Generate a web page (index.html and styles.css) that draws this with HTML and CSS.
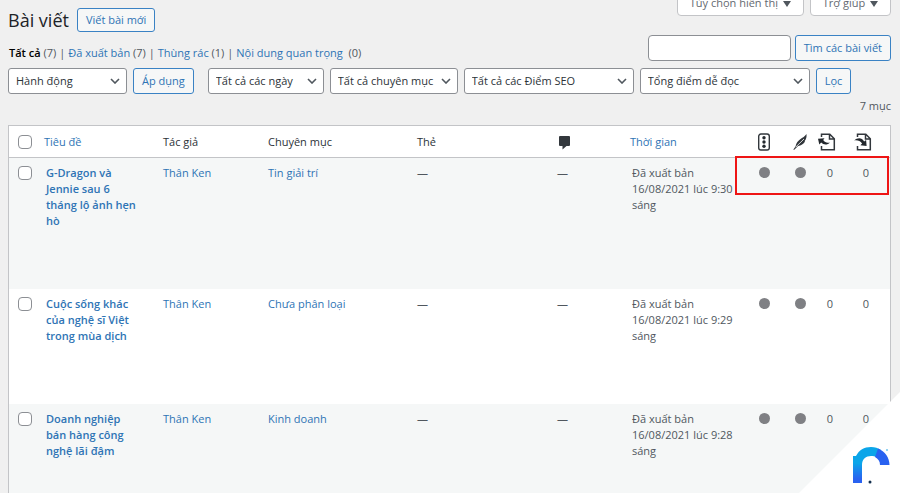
FILE: index.html
```
<!DOCTYPE html>
<html lang="vi">
<head>
    <meta charset="UTF-8">
    <meta name="viewport" content="width=device-width, initial-scale=1.0">
    <title>Bài viết</title>
    <link rel="stylesheet" href="styles.css">
</head>
<body>
    <main class="wrap">
        <header class="page-head">
            <div class="heading">
                <h1>Bài viết</h1>
                <a href="#" class="button">Viết bài mới</a>
            </div>
            <div class="screen-tabs">
                <button type="button" class="tab">Tùy chọn hiển thị <span class="arrow"></span></button>
                <button type="button" class="tab">Trợ giúp <span class="arrow"></span></button>
            </div>
        </header>

        <div class="views-row">
            <ul class="views">
                <li><a href="#" class="current">Tất cả</a> (7) |</li>
                <li><a href="#">Đã xuất bản</a> (7) |</li>
                <li><a href="#">Thùng rác</a> (1) |</li>
                <li><a href="#">Nội dung quan trọng</a>&nbsp; (0)</li>
            </ul>
            <form class="search">
                <input type="search" aria-label="Tìm các bài viết">
                <button type="button" class="button">Tìm các bài viết</button>
            </form>
        </div>

        <div class="filters">
            <div class="group">
                <select class="w-action" aria-label="Hành động"><option>Hành động</option></select>
                <button type="button" class="button">Áp dụng</button>
            </div>
            <div class="group">
                <select class="w-date" aria-label="Ngày"><option>Tất cả các ngày</option></select>
                <select class="w-cat" aria-label="Chuyên mục"><option>Tất cả chuyên mục</option></select>
                <select class="w-score" aria-label="Điểm SEO"><option>Tất cả các Điểm SEO</option></select>
                <select class="w-score" aria-label="Điểm dễ đọc"><option>Tổng điểm dễ đọc</option></select>
                <button type="button" class="button">Lọc</button>
            </div>
        </div>
        <p class="count">7 mục</p>

        <div class="table-box">
            <table class="posts">
                <colgroup>
                    <col class="c-check">
                    <col class="c-title">
                    <col class="c-author">
                    <col class="c-category">
                    <col>
                    <col class="c-comments">
                    <col class="c-date">
                    <col class="c-icon">
                    <col class="c-icon">
                    <col class="c-icon">
                    <col class="c-icon">
                </colgroup>
                <thead>
                    <tr>
                        <th class="check"><input type="checkbox" aria-label="Chọn toàn bộ"></th>
                        <th><a href="#">Tiêu đề</a></th>
                        <th>Tác giả</th>
                        <th>Chuyên mục</th>
                        <th>Thẻ</th>
                        <th>
                            <svg width="14" height="14" viewBox="0 0 14 14"><path d="M3 0h9a1 1 0 0 1 1 1v8a1 1 0 0 1-1 1H9.500L5.500 13.500V10H3a1 1 0 0 1-1-1V1a1 1 0 0 1 1-1z" fill="#32373c"/></svg>
                        </th>
                        <th><a href="#">Thời gian</a></th>
                        <th class="icon">
                            <svg width="18" height="18" viewBox="0 0 18 18" fill="#23282d"><rect x="3.700" y="1" width="10.600" height="16" rx="2.200" fill="none" stroke="#32373c" stroke-width="1.400"/><circle cx="9" cy="4.800" r="1.700"/><circle cx="9" cy="9" r="1.700"/><circle cx="9" cy="13.200" r="1.700"/></svg>
                        </th>
                        <th class="icon">
                            <svg width="18" height="18" viewBox="0 0 18 18"><path d="M15.500 1c.3 3-.3 5.500-2 7.300l.6.300c-1.600 2.600-4 4.200-7 4.500L3 17l-.6-.5 2.200-3.200C5 10.500 6.800 8 9.200 6.300 11.500 4.600 14 3.400 15.500 1z" fill="#32373c"/><path d="M4.800 14l8.200-8" fill="none" stroke="#fff" stroke-width=".8"/></svg>
                        </th>
                        <th class="icon link">
                            <svg width="18" height="18" viewBox="0 0 18 18"><path d="M3.500 4V1.200h8.300l4.500 4.500v11H3.500V13M11.500 1.500V6H16" fill="none" stroke="#32373c" stroke-width="1.500"/><path d="M0 5.800l6.500-.6-1.300 1.900c1.600 2.300 3.800 3 6.600 2.300-2 2.700-6.200 3-8.600.2l-1.900 1.900z" fill="#23282d"/></svg>
                        </th>
                        <th class="icon link">
                            <svg width="18" height="18" viewBox="0 0 18 18"><path d="M3.500 4V1.200h8.300l4.500 4.500v11H3.500V13M11.500 1.500V6H16" fill="none" stroke="#32373c" stroke-width="1.500"/><path d="M.2 7.500c3.500-3.300 7.800-2.800 9.900.9l2-1.500.5 6.100-6.200-.8 1.700-1.600C6.300 7.900 3.500 7 .2 7.500z" fill="#23282d"/></svg>
                        </th>
                    </tr>
                </thead>
                <tbody>
                    <tr class="tall">
                        <td class="check"><input type="checkbox" aria-label="Chọn G-Dragon và Jennie"></td>
                        <td class="title"><a href="#">G-Dragon và Jennie sau 6 tháng lộ ảnh hẹn hò</a></td>
                        <td><a href="#">Thân Ken</a></td>
                        <td><a href="#">Tin giải trí</a></td>
                        <td>—</td>
                        <td>—</td>
                        <td class="date">Đã xuất bản<br>16/08/2021 lúc 9:30 sáng</td>
                        <td class="icon"><span class="dot"></span></td>
                        <td class="icon"><span class="dot"></span></td>
                        <td class="num">0</td>
                        <td class="num">0</td>
                    </tr>
                    <tr>
                        <td class="check"><input type="checkbox" aria-label="Chọn Cuộc sống khác"></td>
                        <td class="title"><a href="#">Cuộc sống khác của nghệ sĩ Việt trong mùa dịch</a></td>
                        <td><a href="#">Thân Ken</a></td>
                        <td><a href="#">Chưa phân loại</a></td>
                        <td>—</td>
                        <td>—</td>
                        <td class="date">Đã xuất bản<br>16/08/2021 lúc 9:29 sáng</td>
                        <td class="icon"><span class="dot"></span></td>
                        <td class="icon"><span class="dot"></span></td>
                        <td class="num">0</td>
                        <td class="num">0</td>
                    </tr>
                    <tr>
                        <td class="check"><input type="checkbox" aria-label="Chọn Doanh nghiệp"></td>
                        <td class="title"><a href="#">Doanh nghiệp bán hàng công nghệ lãi đậm</a></td>
                        <td><a href="#">Thân Ken</a></td>
                        <td><a href="#">Kinh doanh</a></td>
                        <td>—</td>
                        <td>—</td>
                        <td class="date">Đã xuất bản<br>16/08/2021 lúc 9:28 sáng</td>
                        <td class="icon"><span class="dot"></span></td>
                        <td class="icon"><span class="dot"></span></td>
                        <td class="num">0</td>
                        <td class="num">0</td>
                    </tr>
                </tbody>
            </table>
            <div class="highlight"></div>
        </div>
    </main>

    <div class="corner">
        <svg width="38" height="38" viewBox="0 0 38 38">
            <defs>
                <linearGradient id="stem" x1="0" y1="0" x2="0" y2="1">
                    <stop offset="0.250" stop-color="#0ba5e9"/>
                    <stop offset="0.850" stop-color="#2962f0"/>
                </linearGradient>
            </defs>
            <path d="M0 10h9v27H0z" fill="url(#stem)"/>
            <path d="M0 10h3C6 4 11 1 18 1c4 0 7 1 10 3l-4 8c-2-2-4-2-6-2-5 0-9 3-9 9L0 17z" fill="#0ba5e9"/>
            <path d="M25 2.500c7 3 11.500 9 11.500 16.500H27c0-4-2-6-5-8z" fill="#2962f0"/>
            <circle cx="34" cy="4" r="1" fill="#6ec4ee"/>
            <circle cx="17" cy="36" r="1.500" fill="#14304f"/>
        </svg>
    </div>
</body>
</html>
```
FILE: styles.css
```
* {
    box-sizing: border-box;
}
body {
    margin: 0;
    height: 100vh;
    overflow: hidden;
    background: #f0f0f0;
    color: #50575e;
    font-family: "Open Sans", "Noto Sans", sans-serif;
    font-size: 11px;
    line-height: 16px;
}
a {
    color: #2e74b5;
    text-decoration: none;
}
.wrap {
    padding: 0 9px 0 8px;
}

/* heading and screen tabs */
.page-head {
    display: flex;
    justify-content: space-between;
    align-items: flex-start;
}
.heading {
    display: flex;
    align-items: center;
    gap: 8px;
    padding-top: 8px;
}
h1 {
    margin: 0;
    font-size: 18px;
    font-weight: 400;
    line-height: 24px;
    color: #1d2327;
}
.screen-tabs {
    display: flex;
    gap: 6px;
    margin-top: -10px;
}
.tab {
    height: 26px;
    padding: 0 12px;
    border: 1px solid #c3c4c7;
    border-radius: 0 0 4px 4px;
    background: #fff;
    color: #646970;
    font: inherit;
}
.arrow {
    display: inline-block;
    margin-left: 2px;
    border: 4px solid transparent;
    border-top: 6px solid #50575e;
    border-bottom: 0;
}
.button {
    height: 26px;
    padding: 0 8px;
    border: 1px solid #3a82c4;
    border-radius: 3px;
    background: #f6f7f7;
    color: #2e74b5;
    font: inherit;
    line-height: 24px;
    white-space: nowrap;
}
.heading .button {
    height: 24px;
    line-height: 22px;
}

/* status links and search */
.views-row {
    display: flex;
    justify-content: space-between;
    align-items: flex-end;
    margin-top: 3px;
}
.views {
    display: flex;
    gap: 3px;
    margin: 0;
    padding: 0 0 0 1px;
    list-style: none;
}
.views .current {
    color: #000;
    font-weight: 600;
}
.search {
    display: flex;
    gap: 4px;
}
.search input {
    width: 143px;
    height: 26px;
    border: 1px solid #8c8f94;
    border-radius: 4px;
    background: #fff;
}

/* filters */
.filters {
    display: flex;
    gap: 14px;
    margin-top: 7px;
}
.group {
    display: flex;
    gap: 6px;
}
select {
    appearance: none;
    height: 26px;
    padding: 0 16px 0 7px;
    border: 1px solid #8c8f94;
    border-radius: 3px;
    background: #fff url("data:image/svg+xml,%3Csvg xmlns='http://www.w3.org/2000/svg' width='10' height='6' viewBox='0 0 10 6'%3E%3Cpath d='M1 1l4 4 4-4' fill='none' stroke='%2350575e' stroke-width='1.600'/%3E%3C/svg%3E") no-repeat right 6px center;
    color: #2c3338;
    font: inherit;
}
.w-action {
    width: 119px;
}
.w-date {
    width: 116px;
}
.w-cat {
    width: 128px;
}
.w-score {
    width: 170px;
}
.count {
    margin: 4px 0 11px;
    text-align: right;
}

/* posts table */
.table-box {
    position: relative;
    border: 1px solid #c3c4c7;
    background: #fff;
}
.posts {
    width: 100%;
    table-layout: fixed;
    border-collapse: collapse;
}
.c-check {
    width: 27px;
}
.c-title {
    width: 119px;
}
.c-author {
    width: 105px;
}
.c-category {
    width: 149px;
}
.c-comments {
    width: 73px;
}
.c-date {
    width: 124px;
}
.c-icon {
    width: 36px;
}
th {
    height: 31px;
    padding: 2px 8px 0;
    border-bottom: 1px solid #c3c4c7;
    color: #2c3338;
    font-weight: 400;
    text-align: left;
    vertical-align: middle;
}
td {
    height: 115px;
    padding: 7px 8px;
    vertical-align: top;
}
.tall td {
    height: 132px;
}
tbody tr:nth-child(odd) {
    background: #f5f7f7;
}
td.title {
    padding-left: 10px;
    padding-right: 16px;
    font-weight: 600;
}
td.date {
    padding-left: 10px;
}
.check {
    padding-left: 9px;
    padding-right: 0;
}
.check input {
    appearance: none;
    display: block;
    width: 14px;
    height: 14px;
    margin: 0;
    border: 1px solid #8c8f94;
    border-radius: 4px;
    background: #fff;
}
td.check {
    padding-top: 8px;
}
.icon {
    padding-left: 0;
    padding-right: 0;
    text-align: center;
}
.icon.link {
    text-align: left;
}
td.icon {
    padding-top: 8px;
}
.num {
    padding-left: 0;
    padding-right: 21px;
    text-align: right;
}
th svg {
    display: inline-block;
    vertical-align: middle;
}
.dot {
    display: inline-block;
    width: 11px;
    height: 11px;
    border-radius: 50%;
    background: #7f8084;
}
.highlight {
    position: absolute;
    top: 30px;
    right: 1px;
    width: 154px;
    height: 39px;
    border: 2px solid #ee1515;
}

/* brand corner */
.corner {
    position: fixed;
    right: 0;
    bottom: 0;
    display: flex;
    justify-content: flex-end;
    align-items: flex-end;
    width: 101px;
    height: 101px;
    padding: 9px;
    background: #fff;
    clip-path: polygon(100% 0, 100% 100%, 0 100%);
}
```
